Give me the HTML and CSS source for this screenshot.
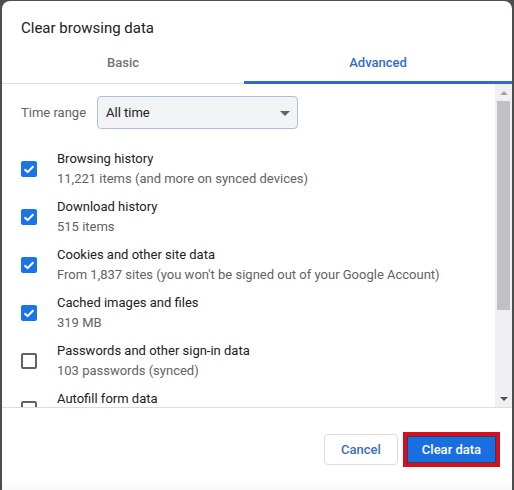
FILE: index.html
```html
<!DOCTYPE html>
<html>
<head>
<meta charset="utf-8">
<link rel="stylesheet" href="styles.css">
</head>
<body>
<div class="dialog">
  <div class="title">Clear browsing data</div>
  <div class="tabs">
    <div class="tab tab-basic">Basic</div>
    <div class="tab tab-active">Advanced</div>
  </div>
  <div class="body">
    <div class="content">
      <div class="range-row">
        <span class="range-label">Time range</span>
        <div class="select">
          <span>All time</span>
          <span class="caret"></span>
        </div>
      </div>
      <div class="rows">
        <div class="row">
          <span class="cb checked"><svg viewBox="0 0 16 16" width="16" height="16"><path d="M3.6 8.2 L6.6 11.1 L12.4 5.2" fill="none" stroke="#fff" stroke-width="2"/></svg></span>
          <div class="text"><div class="main">Browsing history</div><div class="sub">11,221 items (and more on synced devices)</div></div>
        </div>
        <div class="row">
          <span class="cb checked"><svg viewBox="0 0 16 16" width="16" height="16"><path d="M3.6 8.2 L6.6 11.1 L12.4 5.2" fill="none" stroke="#fff" stroke-width="2"/></svg></span>
          <div class="text"><div class="main">Download history</div><div class="sub">515 items</div></div>
        </div>
        <div class="row">
          <span class="cb checked"><svg viewBox="0 0 16 16" width="16" height="16"><path d="M3.6 8.2 L6.6 11.1 L12.4 5.2" fill="none" stroke="#fff" stroke-width="2"/></svg></span>
          <div class="text"><div class="main">Cookies and other site data</div><div class="sub">From 1,837 sites (you won't be signed out of your Google Account)</div></div>
        </div>
        <div class="row">
          <span class="cb checked"><svg viewBox="0 0 16 16" width="16" height="16"><path d="M3.6 8.2 L6.6 11.1 L12.4 5.2" fill="none" stroke="#fff" stroke-width="2"/></svg></span>
          <div class="text"><div class="main">Cached images and files</div><div class="sub">319 MB</div></div>
        </div>
        <div class="row">
          <span class="cb"></span>
          <div class="text"><div class="main">Passwords and other sign-in data</div><div class="sub">103 passwords (synced)</div></div>
        </div>
        <div class="row row-cut">
          <span class="cb"></span>
          <div class="text"><div class="main">Autofill form data</div></div>
        </div>
      </div>
    </div>
    <div class="scrollbar">
      <div class="arrow arrow-up"></div>
      <div class="thumb"></div>
      <div class="track-rest"></div>
      <div class="arrow arrow-down"></div>
    </div>
  </div>
  <div class="footer">
    <button class="btn btn-cancel">Cancel</button>
    <button class="btn btn-clear">Clear data</button>
  </div>
</div>
</body>
</html>
```

FILE: styles.css
```css
html, body {
  margin: 0;
  padding: 0;
}
body {
  background: #4e4e4e;
  width: 514px;
  height: 490px;
  overflow: hidden;
  font-family: Roboto, "Liberation Sans", sans-serif;
  font-size: 13px;
  color: #202124;
}
.dialog {
  margin: 1px 0 0 2px;
  width: 510px;
  height: 489px;
  background: #fff;
  border-radius: 8px 8px 0 0;
  display: flex;
  flex-direction: column;
  overflow: hidden;
}
.title {
  padding: 17px 19px 0;
  font-size: 15px;
  line-height: 20px;
  height: 20px;
  color: #202124;
}
.tabs {
  display: flex;
  height: 46px;
}
.tab {
  box-sizing: border-box;
  height: 46px;
  padding-top: 15px;
  line-height: 20px;
  text-align: center;
  font-weight: 500;
  font-size: 13px;
}
.tab-basic {
  flex: 0 0 242px;
  color: #6f7378;
  border-bottom: 1px solid #dadce0;
}
.tab-active {
  flex: 1;
  color: #2f6dc4;
  border-bottom: 3px solid #2f6dc4;
}
.body {
  height: 323px;
  display: flex;
  border-bottom: 1px solid #dadce0;
}
.content {
  flex: 1;
  overflow: hidden;
  padding: 12px 0 0 19px;
}
.range-row {
  display: flex;
  align-items: center;
  height: 33px;
}
.range-label {
  color: #5f6368;
  width: 76px;
}
.select {
  box-sizing: border-box;
  width: 201px;
  height: 33px;
  background: #f1f3f4;
  border: 1px solid #aebfdc;
  border-radius: 4px;
  display: flex;
  align-items: center;
  justify-content: space-between;
  padding: 0 7px 0 8px;
  color: #202124;
}
.caret {
  width: 0;
  height: 0;
  border-left: 5px solid transparent;
  border-right: 5px solid transparent;
  border-top: 5px solid #5f6368;
  margin-top: 1px;
}
.rows {
  margin-top: 16px;
}
.row {
  height: 48px;
  display: flex;
  align-items: center;
}
.row-cut {
  align-items: flex-start;
  padding-top: 4px;
  box-sizing: border-box;
}
.row-cut .cb {
  margin-top: 12px;
}
.cb {
  box-sizing: border-box;
  width: 16px;
  height: 16px;
  border: 2px solid #5f6368;
  border-radius: 2px;
  margin-right: 20px;
  flex: 0 0 16px;
  display: flex;
}
.cb.checked {
  border: none;
  background: #1a73e8;
}
.text {
  line-height: 20px;
}
.main {
  color: #202124;
}
.sub {
  color: #5f6368;
}
.scrollbar {
  width: 17px;
  background: #f0f0f2;
  display: flex;
  flex-direction: column;
  align-items: center;
}
.arrow {
  height: 17px;
  width: 17px;
  display: flex;
  align-items: center;
  justify-content: center;
}
.arrow-up::after {
  content: "";
  border-left: 4px solid transparent;
  border-right: 4px solid transparent;
  border-bottom: 4px solid #a3a3a3;
}
.arrow-down::after {
  content: "";
  border-left: 4px solid transparent;
  border-right: 4px solid transparent;
  border-top: 4px solid #505050;
}
.thumb {
  width: 13px;
  height: 209px;
  background: #c1c0c3;
}
.track-rest {
  flex: 1;
}
.footer {
  flex: 1;
  display: flex;
  justify-content: flex-end;
  align-items: center;
  padding: 0 12px 0 0;
  gap: 5px;
  background: linear-gradient(#fff 85%, #f9f9fb);
}
.btn {
  font-family: Roboto, "Liberation Sans", sans-serif;
  font-size: 13px;
  font-weight: 500;
  cursor: pointer;
  box-sizing: border-box;
  margin: 0;
}
.btn-cancel {
  width: 74px;
  height: 31px;
  background: #fff;
  border: 1px solid #dadce0;
  border-radius: 4px;
  color: #3c6fb6;
}
.btn-clear {
  width: 97px;
  height: 35px;
  background: #1a6fe0;
  border: 4px solid #d3101e;
  color: #fff;
  border-radius: 0;
  box-shadow: inset 0 0 0 1px #3a3a5a;
}
```
